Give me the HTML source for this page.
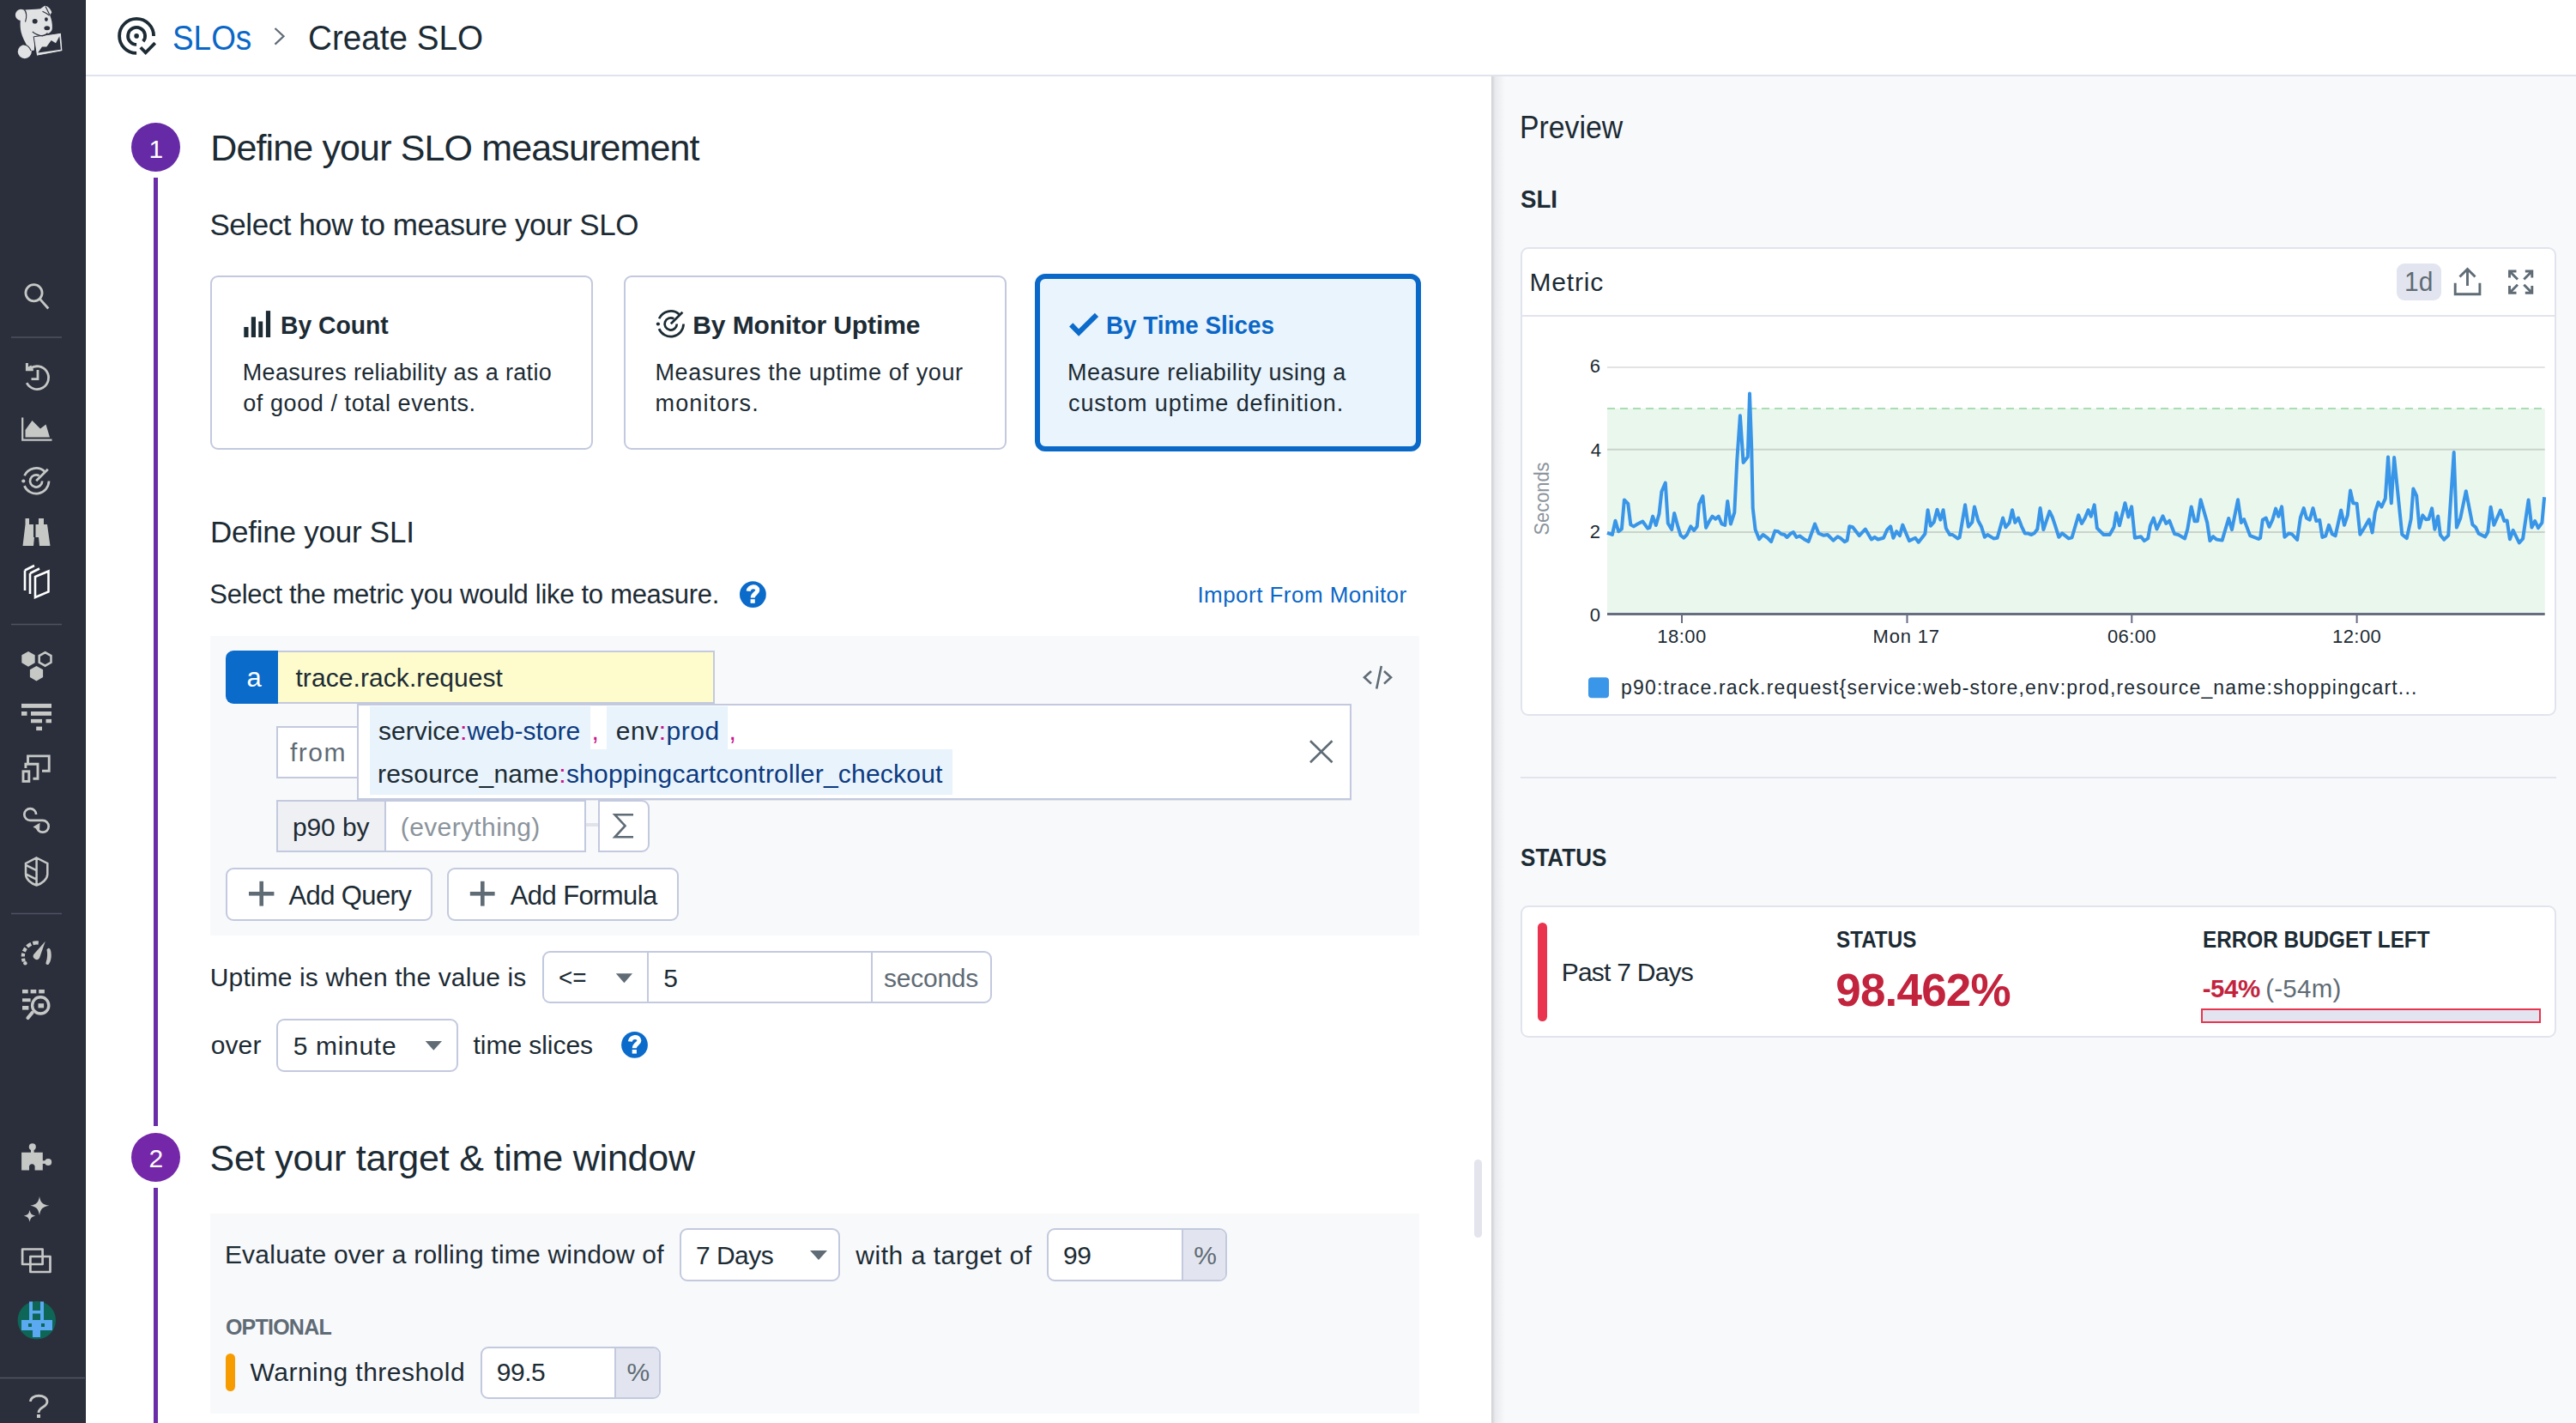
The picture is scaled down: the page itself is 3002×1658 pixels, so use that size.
<!DOCTYPE html>
<html><head><meta charset="utf-8">
<style>
html,body{margin:0;padding:0}
body{width:3002px;height:1658px;overflow:hidden;position:relative;background:#fff;font-family:"Liberation Sans",sans-serif;color:#1c2b34}
.b{position:absolute;box-sizing:border-box}
.t{position:absolute;white-space:pre}
svg.ov{position:absolute;left:0;top:0;width:3002px;height:1658px}
</style></head><body>
<!-- sidebar -->
<div class="b" style="left:0;top:0;width:100px;height:1658px;background:#2b2f3b"></div>
<div class="b" style="left:99px;top:0;width:1px;height:1658px;background:#1f2330"></div>
<!-- header -->
<div class="b" style="left:100px;top:87px;width:2902px;height:2px;background:#dfe3ec"></div>
<!-- right panel -->
<div class="b" style="left:1738px;top:89px;width:1264px;height:1569px;background:#f8f9fb"></div>
<div class="b" style="left:1738px;top:89px;width:16px;height:1569px;background:linear-gradient(to right,rgba(40,45,60,0.20),rgba(40,45,60,0.07) 30%,rgba(40,45,60,0))"></div>
<!-- scrollbar -->
<div class="b" style="left:1718px;top:1351px;width:9px;height:91px;border-radius:5px;background:#e3e4ec"></div>

<!-- step line -->
<div class="b" style="left:179px;top:207px;width:5px;height:1105px;background:#6a2ca8"></div>
<div class="b" style="left:179px;top:1384px;width:5px;height:274px;background:#6a2ca8"></div>
<div class="b" style="left:153px;top:143px;width:57px;height:57px;border-radius:50%;background:#672aa6"></div>
<div class="b" style="left:153px;top:1320px;width:57px;height:57px;border-radius:50%;background:#7427a8"></div>

<!-- cards -->
<div class="b" style="left:245px;top:321px;width:446px;height:203px;border:2px solid #c3c9de;border-radius:9px;background:#fff"></div>
<div class="b" style="left:727px;top:321px;width:446px;height:203px;border:2px solid #c3c9de;border-radius:9px;background:#fff"></div>
<div class="b" style="left:1206px;top:319px;width:450px;height:207px;border:6px solid #0a69c8;border-radius:12px;background:#eaf4fc"></div>

<!-- query box -->
<div class="b" style="left:245px;top:741px;width:1409px;height:349px;background:#f8f9fb"></div>
<div class="b" style="left:263px;top:758px;width:62px;height:62px;background:#0b6bcb;border-radius:9px 0 0 9px"></div>
<div class="b" style="left:324px;top:758px;width:509px;height:62px;border:2px solid #c3c9de;border-left:none;background:#fefccc"></div>
<div class="b" style="left:322px;top:846px;width:96px;height:61px;border:2px solid #c3c9de;background:#fff"></div>
<div class="b" style="left:416px;top:820px;width:1159px;height:112px;border:2px solid #c3c9de;background:#fff;box-shadow:0 1px 0 rgba(150,155,180,0.2)"></div>
<div class="b" style="left:431px;top:823px;width:257px;height:50px;background:#e8f3fb"></div>
<div class="b" style="left:707px;top:823px;width:141px;height:50px;background:#e8f3fb"></div>
<div class="b" style="left:431px;top:873px;width:679px;height:53px;background:#e8f3fb"></div>
<div class="b" style="left:322px;top:932px;width:361px;height:61px;border:2px solid #c3c9de;background:#fff"></div>
<div class="b" style="left:324px;top:934px;width:126px;height:57px;background:#eff0f4;border-right:2px solid #c3c9de"></div>
<div class="b" style="left:683px;top:959px;width:14px;height:4px;background:#e0e3ec"></div>
<div class="b" style="left:697px;top:932px;width:60px;height:61px;border:2px solid #c3c9de;border-radius:0 9px 9px 0;background:#fff"></div>
<div class="b" style="left:263px;top:1011px;width:241px;height:62px;border:2px solid #c3c9de;border-radius:9px;background:#fff"></div>
<div class="b" style="left:521px;top:1011px;width:270px;height:62px;border:2px solid #c3c9de;border-radius:9px;background:#fff"></div>

<!-- uptime -->
<div class="b" style="left:632px;top:1108px;width:524px;height:61px;border:2px solid #c3c9de;border-radius:9px;background:#fff"></div>
<div class="b" style="left:754px;top:1109px;width:2px;height:59px;background:#c3c9de"></div>
<div class="b" style="left:1015px;top:1109px;width:2px;height:59px;background:#c3c9de"></div>
<div class="b" style="left:322px;top:1187px;width:212px;height:62px;border:2px solid #c3c9de;border-radius:9px;background:#fff"></div>

<!-- step 2 box -->
<div class="b" style="left:245px;top:1414px;width:1409px;height:233px;background:#f8f9fb"></div>
<div class="b" style="left:792px;top:1431px;width:187px;height:62px;border:2px solid #c3c9de;border-radius:9px;background:#fff"></div>
<div class="b" style="left:1220px;top:1431px;width:210px;height:62px;border:2px solid #c3c9de;border-radius:9px;background:#fff;overflow:hidden"><div style="position:absolute;left:155px;top:0;width:53px;height:58px;background:#e2e5ef;border-left:2px solid #c3c9de"></div></div>
<div class="b" style="left:263px;top:1577px;width:11px;height:44px;border-radius:6px;background:#f79c00"></div>
<div class="b" style="left:560px;top:1569px;width:210px;height:61px;border:2px solid #c3c9de;border-radius:9px;background:#fff;overflow:hidden"><div style="position:absolute;left:154px;top:0;width:54px;height:57px;background:#e2e5ef;border-left:2px solid #c3c9de"></div></div>

<!-- right: widget -->
<div class="b" style="left:1772px;top:288px;width:1207px;height:546px;border:2px solid #e1e4ed;border-radius:9px;background:#fff"></div>
<div class="b" style="left:1774px;top:367px;width:1203px;height:2px;background:#e1e4ed"></div>
<div class="b" style="left:2793px;top:307px;width:52px;height:43px;border-radius:9px;background:#e2e5ef"></div>
<!-- divider -->
<div class="b" style="left:1772px;top:905px;width:1207px;height:2px;background:#e1e4ed"></div>
<!-- status card -->
<div class="b" style="left:1772px;top:1055px;width:1207px;height:154px;border:2px solid #e1e4ed;border-radius:9px;background:#fff"></div>
<div class="b" style="left:1792px;top:1075px;width:11px;height:115px;border-radius:6px;background:#ea344f"></div>
<div class="b" style="left:2565px;top:1175px;width:396px;height:17px;border:2px solid #e8344e;background:#e2e5ef"></div>

<svg class="ov" viewBox="0 0 3002 1658">
 <!-- chart -->
 <rect x="1873" y="475.9" width="1092.7" height="239.3" fill="#eaf7ec"/>
 <line x1="1873" y1="428.1" x2="2965.7" y2="428.1" stroke="#e3e3e6" stroke-width="2"/>
 <line x1="1873" y1="523.8" x2="2965.7" y2="523.8" stroke="#c9d4cc" stroke-width="2"/>
 <line x1="1873" y1="619.9" x2="2965.7" y2="619.9" stroke="#c9d4cc" stroke-width="2"/>
 <line x1="1873" y1="475.9" x2="2965.7" y2="475.9" stroke="#a9ddb3" stroke-width="2" stroke-dasharray="9,6"/>
 <path d="M1873.0,620.8 L1878.9,623.0 L1882.5,606.8 L1886.2,619.3 L1889.9,616.4 L1892.9,582.4 L1897.3,586.9 L1900.3,611.2 L1903.9,613.4 L1908.4,610.5 L1914.3,607.5 L1920.2,615.6 L1922.4,614.9 L1926.1,601.6 L1929.8,612.0 L1933.5,598.7 L1936.4,572.8 L1940.8,562.5 L1943.8,609.7 L1948.2,617.1 L1951.2,597.9 L1955.6,614.2 L1958.6,623.8 L1962.3,626.7 L1965.9,623.0 L1970.4,613.4 L1974.1,617.9 L1977.7,613.4 L1980.0,587.6 L1984.4,578.0 L1988.1,614.9 L1991.8,607.5 L1995.5,601.6 L1999.2,604.6 L2002.8,601.6 L2006.5,610.5 L2010.2,612.0 L2013.2,583.9 L2016.9,610.5 L2021.3,597.2 L2024.2,537.4 L2027.9,484.3 L2031.6,538.9 L2036.8,532.3 L2039.0,458.5 L2041.2,521.2 L2042.7,592.0 L2045.6,617.1 L2050.1,628.2 L2054.5,623.0 L2059.7,626.7 L2064.1,631.1 L2068.5,618.6 L2072.2,619.3 L2075.9,622.3 L2079.6,623.0 L2082.5,626.0 L2087.0,621.5 L2089.9,620.1 L2093.6,626.0 L2097.3,624.5 L2102.5,628.2 L2107.6,631.1 L2115.0,610.5 L2119.4,621.5 L2125.4,623.8 L2129.8,623.0 L2136.4,629.7 L2141.6,625.2 L2144.5,626.7 L2149.7,631.1 L2152.6,629.6 L2155.3,613.3 L2159.1,614.3 L2166.7,624.1 L2173.8,616.5 L2180.9,628.5 L2184.7,625.8 L2188.5,628.5 L2195.0,626.8 L2199.3,617.1 L2203.2,613.3 L2206.4,626.8 L2210.2,619.2 L2214.0,624.1 L2217.3,611.6 L2221.1,620.9 L2224.9,630.1 L2232.0,626.8 L2235.8,631.7 L2243.4,622.0 L2246.6,594.2 L2249.9,612.7 L2253.7,608.4 L2257.5,593.7 L2261.3,605.7 L2264.6,594.2 L2267.8,615.4 L2272.2,623.0 L2275.4,623.0 L2281.4,627.4 L2283.6,626.3 L2290.1,588.3 L2293.9,613.8 L2298.3,608.4 L2301.0,590.4 L2305.3,606.7 L2309.1,613.8 L2312.9,625.8 L2316.2,623.0 L2323.3,627.4 L2327.6,626.8 L2334.1,603.5 L2337.4,614.3 L2341.7,608.9 L2345.0,594.2 L2348.3,608.9 L2352.1,603.5 L2355.9,613.3 L2359.7,621.4 L2362.9,621.4 L2367.3,623.0 L2371.1,620.9 L2374.3,616.5 L2377.6,592.1 L2381.4,617.1 L2388.5,595.9 L2391.7,602.4 L2395.0,612.2 L2399.3,625.8 L2403.2,621.4 L2410.8,627.4 L2414.6,626.3 L2422.2,600.2 L2426.0,610.0 L2429.8,603.5 L2433.6,594.2 L2436.8,601.8 L2440.7,588.3 L2443.9,615.4 L2451.5,623.0 L2458.6,623.0 L2463.5,614.3 L2466.2,597.5 L2470.0,612.2 L2476.5,586.1 L2480.3,602.4 L2484.1,590.4 L2487.9,626.8 L2495.0,625.2 L2498.8,630.1 L2503.2,627.4 L2505.9,612.2 L2509.7,603.5 L2513.5,616.5 L2520.5,601.3 L2524.3,610.0 L2528.2,606.7 L2534.1,622.0 L2538.5,623.0 L2546.1,627.4 L2549.3,616.5 L2553.7,590.4 L2557.5,607.3 L2560.8,607.3 L2564.6,582.3 L2572.2,608.9 L2575.4,630.1 L2579.2,625.2 L2583.0,628.5 L2589.6,629.6 L2597.2,604.0 L2601.0,617.1 L2608.0,582.3 L2611.8,608.9 L2615.1,605.1 L2622.2,624.1 L2632.0,627.9 L2634.1,626.8 L2636.8,605.7 L2640.7,603.5 L2644.5,613.8 L2648.3,605.7 L2652.1,592.6 L2655.3,601.8 L2659.1,590.4 L2662.4,625.8 L2667.3,621.4 L2671.1,622.5 L2677.1,629.0 L2680.9,602.9 L2684.7,592.1 L2687.9,603.5 L2691.7,605.7 L2695.5,592.1 L2699.3,607.0 L2703.2,605.9 L2706.4,626.0 L2710.2,624.3 L2714.0,611.8 L2717.8,622.2 L2721.6,624.3 L2728.2,594.5 L2732.0,611.8 L2735.8,600.4 L2739.0,571.6 L2742.3,586.3 L2746.6,586.8 L2750.4,622.7 L2754.8,615.7 L2760.8,605.3 L2764.6,620.5 L2767.8,597.2 L2771.6,585.2 L2775.4,590.7 L2779.8,580.9 L2783.0,532.5 L2786.8,586.3 L2790.1,533.0 L2799.3,622.7 L2804.8,627.1 L2809.7,604.8 L2812.4,569.5 L2816.2,577.6 L2819.5,615.1 L2823.3,600.4 L2827.1,605.3 L2830.3,604.8 L2834.1,592.3 L2837.4,616.7 L2841.2,601.5 L2843.9,623.3 L2848.3,628.7 L2853.2,623.8 L2859.7,527.1 L2862.9,614.6 L2867.3,603.7 L2873.8,572.2 L2881.4,611.3 L2885.2,614.6 L2888.5,621.6 L2896.1,625.4 L2899.3,620.0 L2902.6,590.7 L2906.4,611.8 L2914.0,594.5 L2918.4,607.0 L2921.6,606.4 L2924.9,628.2 L2928.7,617.8 L2935.8,632.5 L2940.1,627.6 L2946.6,582.5 L2950.4,614.6 L2954.2,607.0 L2958.0,615.1 L2962.4,609.1 L2965.1,579.2" fill="none" stroke="#3895e8" stroke-width="4" stroke-linejoin="round"/>
 <rect x="1873" y="714" width="1092.7" height="3" fill="#676d82"/>
 <g fill="#676d82"><rect x="1959" y="716" width="2" height="10"/><rect x="2221.5" y="716" width="2" height="10"/><rect x="2483.3" y="716" width="2" height="10"/><rect x="2745.6" y="716" width="2" height="10"/></g>
 <rect x="1851" y="789.3" width="24" height="24" rx="4" fill="#3a96e8"/>
 <text x="0" y="0" transform="translate(1804.5,623.5) rotate(-90)" font-family="Liberation Sans" font-size="23" fill="#8b949c" textLength="85" lengthAdjust="spacingAndGlyphs">Seconds</text>

 <!-- breadcrumb icon -->
 <g fill="none" stroke="#1c2b34" stroke-width="3.8">
  <path d="M179.1,41.9 A20,20 0 1 0 159.1,61.9"/>
  <path d="M166.8,48.3 A10,10 0 1 0 159.1,51.9"/>
  <path d="M163.8,55.3 L169.7,61.4 L180.7,50.2"/>
 </g>
 <circle cx="159.1" cy="41.9" r="2.8" fill="#1c2b34"/>
 <path d="M320.5,33 L330.5,42.3 L320.5,51.6" fill="none" stroke="#5f6b75" stroke-width="2.2"/>

 <!-- card icons -->
 <g fill="#1c2b34"><rect x="284.3" y="381" width="5.2" height="12"/><rect x="292.8" y="369.2" width="5.2" height="23.8"/><rect x="301.3" y="374.5" width="4.9" height="18.5"/><rect x="309.9" y="362.1" width="5.2" height="30.9"/></g>
 <g fill="none" stroke="#1c2b34" stroke-width="2.7">
  <path d="M768.1,371.3 A14.9,14.9 0 0 1 791.5,366.2"/>
  <path d="M796.6,377.5 A14.9,14.9 0 0 1 768.0,383.1"/>
  <path d="M785.3,371.3 A7.1,7.1 0 1 0 788.8,377.5"/>
  <path d="M781.8,377.3 L795.4,363.7"/>
 </g>
 <circle cx="766.9" cy="377.5" r="2.1" fill="#1c2b34"/>
 <path d="M1248.2,378.3 L1257.2,387.5 L1278,366.8" fill="none" stroke="#0b6bcb" stroke-width="6"/>

 <!-- help icons -->
 <g><circle cx="877.4" cy="692.6" r="15.4" fill="#0b6bcb"/><path d="M872.2,688.8 C872.8,682.6 882.6,682 882.8,687.6 C883,691.2 877.2,691.3 877.2,696.5" fill="none" stroke="#fff" stroke-width="5"/><rect x="874.6" y="698.2" width="5.2" height="4.6" fill="#fff"/></g>
 <g transform="translate(-137.9,524.8)"><circle cx="877.4" cy="692.6" r="15.4" fill="#0b6bcb"/><path d="M872.2,688.8 C872.8,682.6 882.6,682 882.8,687.6 C883,691.2 877.2,691.3 877.2,696.5" fill="none" stroke="#fff" stroke-width="5"/><rect x="874.6" y="698.2" width="5.2" height="4.6" fill="#fff"/></g>

 <!-- query icons -->
 <g fill="none" stroke="#5f6b75" stroke-width="2.6">
  <path d="M1527,863.3 L1552.5,888.3 M1552.5,863.3 L1527,888.3"/>
  <path d="M1598,782 L1590,789.3 L1598,796.6 M1613,782 L1621,789.3 L1613,796.6 M1609.8,776 L1604.2,802.6"/>
  <path d="M738,949.3 L716.5,949.3 L728.5,962.2 L716.5,975.3 L738,975.3"/>
 </g>
 <g fill="#5f6b75"><rect x="290" y="1039" width="29.4" height="4.6"/><rect x="302.4" y="1026.8" width="4.6" height="28.8"/><rect x="547.8" y="1039" width="28.8" height="4.6"/><rect x="560" y="1026.8" width="4.6" height="28.8"/></g>
 <g fill="#5f6b75">
  <path d="M717.8,1134.3 L737,1134.3 L727.4,1145.2 Z"/>
  <path d="M495.7,1213 L515,1213 L505.35,1223.8 Z"/>
  <path d="M944,1457 L964,1457 L954,1468 Z"/>
 </g>

 <!-- widget icons -->
 <g fill="none" stroke="#5f6b75" stroke-width="2.9">
  <path d="M2875.5,333 L2875.5,315 M2866.5,322.5 L2875.5,313.5 L2884.5,322.5"/>
  <path d="M2861.2,329.8 L2861.2,342.7 L2889.9,342.7 L2889.9,329.8"/>
  <path d="M2924.5,323.5 L2924.5,316 L2932.5,316 M2924.5,316 L2934,325.5"/>
  <path d="M2950.8,323.5 L2950.8,316 L2942.8,316 M2950.8,316 L2941.3,325.5"/>
  <path d="M2924.5,333 L2924.5,341.3 L2932.5,341.3 M2924.5,341.3 L2934,331.8"/>
  <path d="M2950.8,333 L2950.8,341.3 L2942.8,341.3 M2950.8,341.3 L2941.3,331.8"/>
 </g>

 <!-- sidebar: logo -->
 <g fill="#e1e2e4">
  <path d="M27,12 C33,11 40,11 47,10.3 L52,6.8 C55,6.5 59,10 60.3,14.4 L58.2,17.8 C60,22 61.2,28 60.9,33 C60.7,36 58.5,38.4 55,39.5 C50,42.5 45,43 40.5,42.8 L39.9,58.5 C37.5,60 33.5,58 31.5,53.5 C29.5,49 26,44 24.6,37.5 C23.3,31 22.5,22 27,12 Z"/>
  <circle cx="24.5" cy="17.4" r="6.6"/>
  <circle cx="28.8" cy="60.2" r="8"/>
  <path d="M39.2,42.8 L71.4,38.2 L73,59.6 L42.6,65.3 Z" stroke="#2b2f3b" stroke-width="1"/>
 </g>
 <g fill="none" stroke="#2b2f3b" stroke-width="1.1">
  <path d="M28.5,11.5 C31,14 31.5,20 29.5,25.5"/>
  <path d="M49.5,13.2 C52.5,14.5 55,16 57.5,18"/><path d="M53,7.5 L58,17.5"/>
  <path d="M37.8,37 C41,39.5 45,41.5 49.5,42 C52,41.5 54,40 55.5,38.5"/>
  <path d="M28,52 C31,52.5 34.5,55 36,59"/>
 </g>
 <g fill="#2b2f3b">
  <path d="M44.2,61.4 L49,54.5 L54.3,54.5 L59.7,47 L65,50.2 L69.3,42.2 L70.9,57.7 Z"/>
  <ellipse cx="40.7" cy="24.8" rx="3" ry="2.8"/><ellipse cx="53.9" cy="22.6" rx="1.9" ry="2.3"/><ellipse cx="54.8" cy="32.8" rx="3.4" ry="2.5"/>
 </g>
 <!-- sidebar icons -->
 <g fill="none" stroke="#c6c8c6" stroke-width="2.8">
  <circle cx="39.5" cy="341.3" r="9.6"/><path d="M46.5,348.3 L56.3,359.5"/>
  <path d="M35.2,429.4 A13.4,13.4 0 1 1 31.2,446.2"/><path d="M44,430.9 L44,441.6 L36.5,441.6"/>
  <path d="M26.2,486.5 L26.2,512.6 L60.5,512.6" stroke-width="2.2"/>
  <g transform="translate(-739.6,183)" stroke-width="2.7">
   <path d="M768.1,371.3 A14.9,14.9 0 0 1 791.5,366.2"/>
   <path d="M796.6,377.5 A14.9,14.9 0 0 1 768.0,383.1"/>
   <path d="M785.3,371.3 A7.1,7.1 0 1 0 788.8,377.5"/>
   <path d="M781.8,377.3 L795.4,363.7"/>
  </g>
  <path d="M29,664.5 L40,659 M29,664.5 L29,688 M35,668 L46,662.5 M35,668 L35,692 M41,672 L56.5,665.5 L56.5,689.5 L41,696 Z" stroke-width="2.6" stroke="#ffffff"/>
  <path d="M52.6,760.2 L59.5,764.1 L59.5,771.8 L52.6,775.7 L45.7,771.8 L45.7,764.1 Z" stroke-width="2.5"/>
  <path d="M32.5,889 L32.5,880.9 L57.2,880.9 L57.2,898.2 L49,898.2 M29.9,895 L29.9,890.3 L44,890.3 L44,907.2 L38.5,907.2" stroke-width="2.9"/>
  <rect x="27" y="898.8" width="6.8" height="11.6" stroke-width="2.9"/>
  <path d="M42.1,949 A6.9,6.9 0 1 0 35.2,955.9 L49.8,955.9 A6.9,6.9 0 1 1 42.9,962.8" stroke-width="2.7"/>
  <path d="M42.6,999.5 L55.3,1006 L55.3,1018.5 C55.3,1024.5 49,1029.5 42.6,1031.5 C36.2,1029.5 30,1024.5 30,1018.5 L30,1006 Z M42.6,1000 L42.6,1031.5 M30.5,1008.2 L42,1013.8 M30.5,1018.6 L42,1024.3" stroke-width="2.5"/>
  <path d="M44.8,1098.6 A16,16 0 0 0 29.6,1123.5" stroke-width="4.2" stroke-dasharray="6.5,2.2,5.6,2.2,4.6,2.2,3.8,2.2,3.6,20"/>
  
  <circle cx="47.2" cy="1171.4" r="9.6" stroke-width="3.4"/><path d="M37.5,1180 L32.5,1186" stroke-width="4.2" stroke-linecap="round"/>
  <path d="M26.1,1455.5 L26.1,1473 L49.6,1473 L49.6,1455.5 Z M35.4,1464 L35.4,1482 L58.5,1482 L58.5,1464 Z" stroke-width="2.7" stroke-linejoin="round"/>
  <path d="M35.5,1633 C35.5,1624 55,1624 55,1633 C55,1640 45,1639 45,1646" stroke-width="2.8"/>
 </g>
 <g fill="#c6c8c6">
  <path d="M29.5,509.5 L29.5,501 L37.5,490 L47,499.5 L53.5,494.5 L58,509.5 Z"/>
  <path d="M29.5,604 L34,604 L34,611 L39,611 L39,626 L41.5,626 L41.5,611 L45,611 L45,604 L51,604 L51,611 L55,611 L58.5,636 L46,636 L45,626 L40,626 L39,636 L26.5,636 L29.5,611 Z"/>
  <path d="M29.9,423 L32.9,423 L32.9,427.6 L36.2,425.6 L37.4,427.6 L35,429.3 L38.8,429.3 L38.8,432.3 L29.9,432.3 Z"/>
  <circle cx="766.9" cy="377.5" r="2.1" transform="translate(-739.6,183)"/>
  <path d="M33,758.9 L40.7,763.35 L40.7,772.25 L33,776.7 L25.3,772.25 L25.3,763.35 Z"/>
  <path d="M42.5,775.9 L50.1,780.3 L50.1,789 L42.5,793.4 L34.9,789 L34.9,780.3 Z"/>
  <rect x="25" y="819.9" width="35" height="4.9"/><rect x="25" y="829" width="6.5" height="4.8"/><rect x="36" y="829" width="24" height="4.8"/>
  <rect x="36" y="837.9" width="13" height="4.4"/><rect x="53.5" y="837.9" width="6.5" height="4.4"/><rect x="42.2" y="846.6" width="6.8" height="4.5"/>
  <path d="M38.5,963.5 L46.5,958.8 L46,968 Z"/>
  <circle cx="29.4" cy="1122.3" r="2.2"/><path d="M52.8,1096.7 L46,1116.3 A3.9,3.9 0 1 1 39.5,1111.8 Z"/><path d="M54.5,1106.5 C56.5,1103.8 58,1103.8 59.2,1108 C60.2,1113 60,1119 56.8,1123.5 C55,1125 52.8,1123.5 53.6,1121.3 C55.2,1117 55.6,1111 54.5,1106.5 Z"/>
  <rect x="26" y="1153" width="6.7" height="4.4"/><rect x="35.6" y="1153" width="6.7" height="4.4"/><rect x="45.2" y="1153" width="6.7" height="4.4"/>
  <rect x="26" y="1163.3" width="9.6" height="3.9"/><rect x="26" y="1172" width="7.4" height="4.6"/><rect x="44.5" y="1169.2" width="6.6" height="5.2"/>
  <path d="M25.1,1342.8 L49.8,1342.8 L49.8,1363.6 L40.6,1363.6 L40.6,1360.5 A3.4,3.4 0 1 0 34,1360.5 L34,1363.6 L25.1,1363.6 Z"/><circle cx="37.8" cy="1336.2" r="4"/><rect x="36" y="1338" width="3.6" height="6"/><circle cx="56.2" cy="1354.1" r="4"/><rect x="48" y="1352.3" width="6" height="3.6"/>
  <path d="M46,1394 C47.2,1401 49.5,1403.5 57.4,1404.7 C49.5,1406 47.2,1408.5 46,1416 C44.8,1408.5 42.5,1406 35.2,1404.7 C42.5,1403.5 44.8,1401 46,1394 Z"/>
  <path d="M34.6,1409.8 C35.5,1414.5 37,1415.8 41.5,1416.7 C37,1417.6 35.5,1419 34.6,1423.7 C33.7,1419 32.2,1417.6 27.6,1416.7 C32.2,1415.8 33.7,1414.5 34.6,1409.8 Z"/>
  <rect x="43" y="1648" width="4" height="4"/>
 </g>
 <!-- dividers -->
 <g stroke-width="1.5"><line x1="13" y1="393" x2="72" y2="393" stroke="#4e5363"/><line x1="13" y1="727.5" x2="72" y2="727.5" stroke="#4e5363"/><line x1="13" y1="1064.5" x2="72" y2="1064.5" stroke="#4e5363"/><line x1="0" y1="1605.5" x2="99" y2="1605.5" stroke="#505566"/></g>
 <!-- avatar -->
 <circle cx="42.8" cy="1538.3" r="22.2" fill="#0e6657"/>
 <g fill="#5aa9f1"><rect x="34" y="1516.5" width="4" height="22"/><rect x="47" y="1516.5" width="4" height="22"/><rect x="38" y="1527" width="9" height="3.5"/><rect x="25" y="1538" width="36" height="12"/><rect x="38" y="1550" width="9" height="8"/></g>
 <g fill="#0e6657"><rect x="33" y="1542" width="4" height="4"/><rect x="48" y="1542" width="4" height="4"/></g>
</svg>
<div class="t" style="left:200.7px;top:22.9px;font-size:41.5px;line-height:41.5px;color:#0a67c7;transform:scaleX(0.8890);transform-origin:0 0">SLOs</div>
<div class="t" style="left:358.8px;top:22.9px;font-size:41.5px;line-height:41.5px;color:#1c2b34;transform:scaleX(0.9316);transform-origin:0 0">Create SLO</div>
<div class="t" style="left:173.4px;top:158.6px;font-size:30px;line-height:30px;color:#ffffff">1</div>
<div class="t" style="left:173.5px;top:1334.5px;font-size:30px;line-height:30px;color:#ffffff">2</div>
<div class="t" style="left:245.2px;top:150.5px;font-size:43px;line-height:43px;color:#1c2b34;letter-spacing:-0.86px">Define your SLO measurement</div>
<div class="t" style="left:244.5px;top:244.4px;font-size:35px;line-height:35px;color:#1c2b34;letter-spacing:-0.47px">Select how to measure your SLO</div>
<div class="t" style="left:326.5px;top:364.2px;font-size:30px;line-height:30px;color:#1c2b34;font-weight:700;transform:scaleX(0.9435);transform-origin:0 0">By Count</div>
<div class="t" style="left:282.7px;top:420.8px;font-size:27px;line-height:27px;color:#1c2b34;letter-spacing:0.35px">Measures reliability as a ratio</div>
<div class="t" style="left:283.2px;top:456.8px;font-size:27px;line-height:27px;color:#1c2b34;letter-spacing:0.58px">of good / total events.</div>
<div class="t" style="left:807.3px;top:363.8px;font-size:30px;line-height:30px;color:#1c2b34;font-weight:700;letter-spacing:-0.09px">By Monitor Uptime</div>
<div class="t" style="left:763.5px;top:420.9px;font-size:27px;line-height:27px;color:#1c2b34;letter-spacing:0.63px">Measures the uptime of your</div>
<div class="t" style="left:763.5px;top:456.7px;font-size:27px;line-height:27px;color:#1c2b34;letter-spacing:1.14px">monitors.</div>
<div class="t" style="left:1288.7px;top:364.2px;font-size:30px;line-height:30px;color:#0a67c7;font-weight:700;transform:scaleX(0.9274);transform-origin:0 0">By Time Slices</div>
<div class="t" style="left:1244.0px;top:420.8px;font-size:27px;line-height:27px;color:#1c2b34;letter-spacing:0.47px">Measure reliability using a</div>
<div class="t" style="left:1245.0px;top:456.6px;font-size:27px;line-height:27px;color:#1c2b34;letter-spacing:0.90px">custom uptime definition.</div>
<div class="t" style="left:244.9px;top:602.1px;font-size:35px;line-height:35px;color:#1c2b34;letter-spacing:-0.23px">Define your SLI</div>
<div class="t" style="left:244.3px;top:677.0px;font-size:31px;line-height:31px;color:#1c2b34;letter-spacing:-0.29px">Select the metric you would like to measure.</div>
<div class="t" style="left:1395.4px;top:680.2px;font-size:26px;line-height:26px;color:#0a67c7;letter-spacing:0.46px">Import From Monitor</div>
<div class="t" style="left:287.5px;top:774.1px;font-size:31px;line-height:31px;color:#ffffff">a</div>
<div class="t" style="left:344.4px;top:775.1px;font-size:30px;line-height:30px;color:#1c2b34;letter-spacing:0.08px">trace.rack.request</div>
<div class="t" style="left:338.0px;top:862.0px;font-size:30px;line-height:30px;color:#5f6b75;letter-spacing:1.50px">from</div>
<div class="t" style="left:441.0px;top:837.4px;font-size:30px;line-height:30px;color:#1c2b34">service<span style="color:#c8158f">:</span><span style="color:#0d3a80">web-store</span></div>
<div class="t" style="left:717.8px;top:837.4px;font-size:30px;line-height:30px;color:#1c2b34;letter-spacing:0.51px">env<span style="color:#c8158f">:</span><span style="color:#0d3a80">prod</span></div>
<div class="t" style="left:689.5px;top:837.4px;font-size:30px;line-height:30px;color:#c8158f">,</div>
<div class="t" style="left:849.5px;top:837.4px;font-size:30px;line-height:30px;color:#c8158f">,</div>
<div class="t" style="left:440.0px;top:887.0px;font-size:30px;line-height:30px;color:#1c2b34;letter-spacing:0.22px">resource_name<span style="color:#c8158f">:</span><span style="color:#0d3a80">shoppingcartcontroller_checkout</span></div>
<div class="t" style="left:340.9px;top:949.0px;font-size:30px;line-height:30px;color:#1c2b34;letter-spacing:-0.10px">p90 by</div>
<div class="t" style="left:466.8px;top:949.0px;font-size:30px;line-height:30px;color:#8b949c;letter-spacing:0.37px">(everything)</div>
<div class="t" style="left:336.5px;top:1027.5px;font-size:31px;line-height:31px;color:#1c2b34;letter-spacing:-0.62px">Add Query</div>
<div class="t" style="left:594.8px;top:1027.5px;font-size:31px;line-height:31px;color:#1c2b34;letter-spacing:-0.61px">Add Formula</div>
<div class="t" style="left:244.8px;top:1123.6px;font-size:30px;line-height:30px;color:#1c2b34;letter-spacing:0.13px">Uptime is when the value is</div>
<div class="t" style="left:651.1px;top:1124.0px;font-size:30px;line-height:30px;color:#1c2b34;transform:scaleX(0.9273);transform-origin:0 0">&lt;=</div>
<div class="t" style="left:773.3px;top:1125.0px;font-size:30px;line-height:30px;color:#1c2b34">5</div>
<div class="t" style="left:1029.9px;top:1125.0px;font-size:30px;line-height:30px;color:#5f6b75;letter-spacing:-0.22px">seconds</div>
<div class="t" style="left:245.8px;top:1202.9px;font-size:30px;line-height:30px;color:#1c2b34;letter-spacing:0.07px">over</div>
<div class="t" style="left:341.7px;top:1203.6px;font-size:30px;line-height:30px;color:#1c2b34;letter-spacing:0.69px">5 minute</div>
<div class="t" style="left:551.6px;top:1202.9px;font-size:30px;line-height:30px;color:#1c2b34;letter-spacing:-0.06px">time slices</div>
<div class="t" style="left:244.5px;top:1327.9px;font-size:43px;line-height:43px;color:#1c2b34;letter-spacing:-0.20px">Set your target &amp; time window</div>
<div class="t" style="left:261.9px;top:1446.7px;font-size:30px;line-height:30px;color:#1c2b34;letter-spacing:0.22px">Evaluate over a rolling time window of</div>
<div class="t" style="left:811.0px;top:1447.5px;font-size:30px;line-height:30px;color:#1c2b34;letter-spacing:-0.52px">7 Days</div>
<div class="t" style="left:997.3px;top:1447.5px;font-size:30px;line-height:30px;color:#1c2b34;letter-spacing:0.53px">with a target of</div>
<div class="t" style="left:1239.0px;top:1447.5px;font-size:30px;line-height:30px;color:#1c2b34;letter-spacing:-0.40px">99</div>
<div class="t" style="left:1391.3px;top:1447.5px;font-size:30px;line-height:30px;color:#5f6b75">%</div>
<div class="t" style="left:262.9px;top:1533.9px;font-size:25px;line-height:25px;color:#5f6b75;font-weight:700;letter-spacing:-0.76px">OPTIONAL</div>
<div class="t" style="left:291.6px;top:1584.4px;font-size:30px;line-height:30px;color:#1c2b34;letter-spacing:0.48px">Warning threshold</div>
<div class="t" style="left:578.8px;top:1584.4px;font-size:30px;line-height:30px;color:#1c2b34;letter-spacing:-0.50px">99.5</div>
<div class="t" style="left:730.4px;top:1584.4px;font-size:30px;line-height:30px;color:#5f6b75">%</div>
<div class="t" style="left:1771.0px;top:131.0px;font-size:36px;line-height:36px;color:#1c2b34;transform:scaleX(0.9392);transform-origin:0 0">Preview</div>
<div class="t" style="left:1772.1px;top:216.5px;font-size:30px;line-height:30px;color:#1c2b34;font-weight:700;transform:scaleX(0.9227);transform-origin:0 0">SLI</div>
<div class="t" style="left:1782.4px;top:314.2px;font-size:30px;line-height:30px;color:#1c2b34;letter-spacing:0.84px">Metric</div>
<div class="t" style="left:2802.4px;top:313.2px;font-size:31px;line-height:31px;color:#5f6b75;transform:scaleX(0.9645);transform-origin:0 0">1d</div>
<div class="t" style="left:1852.8px;top:416.4px;font-size:22px;line-height:22px;color:#1c2b34">6</div>
<div class="t" style="left:1853.8px;top:513.8px;font-size:22px;line-height:22px;color:#1c2b34">4</div>
<div class="t" style="left:1852.8px;top:608.8px;font-size:22px;line-height:22px;color:#1c2b34">2</div>
<div class="t" style="left:1852.8px;top:706.2px;font-size:22px;line-height:22px;color:#1c2b34">0</div>
<div class="t" style="left:1931.2px;top:730.6px;font-size:22px;line-height:22px;color:#1c2b34;letter-spacing:0.52px">18:00</div>
<div class="t" style="left:2182.6px;top:730.6px;font-size:22px;line-height:22px;color:#1c2b34;letter-spacing:0.80px">Mon 17</div>
<div class="t" style="left:2456.0px;top:730.6px;font-size:22px;line-height:22px;color:#1c2b34;letter-spacing:0.38px">06:00</div>
<div class="t" style="left:2718.0px;top:730.6px;font-size:22px;line-height:22px;color:#1c2b34;letter-spacing:0.45px">12:00</div>
<div class="t" style="left:1889.0px;top:789.9px;font-size:23px;line-height:23px;color:#1c2b34;letter-spacing:1.17px">p90:trace.rack.request{service:web-store,env:prod,resource_name:shoppingcart...</div>
<div class="t" style="left:1771.9px;top:983.9px;font-size:30px;line-height:30px;color:#1c2b34;font-weight:700;transform:scaleX(0.8684);transform-origin:0 0">STATUS</div>
<div class="t" style="left:1819.7px;top:1117.9px;font-size:30px;line-height:30px;color:#1c2b34;letter-spacing:-0.76px">Past 7 Days</div>
<div class="t" style="left:2140.0px;top:1081.7px;font-size:27px;line-height:27px;color:#1c2b34;font-weight:700;transform:scaleX(0.8971);transform-origin:0 0">STATUS</div>
<div class="t" style="left:2139.3px;top:1127.0px;font-size:53px;line-height:53px;color:#c2233d;font-weight:700;letter-spacing:-0.82px">98.462%</div>
<div class="t" style="left:2566.9px;top:1081.6px;font-size:27px;line-height:27px;color:#1c2b34;font-weight:700;transform:scaleX(0.8997);transform-origin:0 0">ERROR BUDGET LEFT</div>
<div class="t" style="left:2566.8px;top:1136.9px;font-size:29.5px;line-height:29.5px;color:#c2233d;font-weight:700;letter-spacing:-0.50px">-54%</div>
<div class="t" style="left:2640.2px;top:1136.9px;font-size:29.5px;line-height:29.5px;color:#5f6b75;letter-spacing:0.26px">(-54m)</div>
</body></html>
